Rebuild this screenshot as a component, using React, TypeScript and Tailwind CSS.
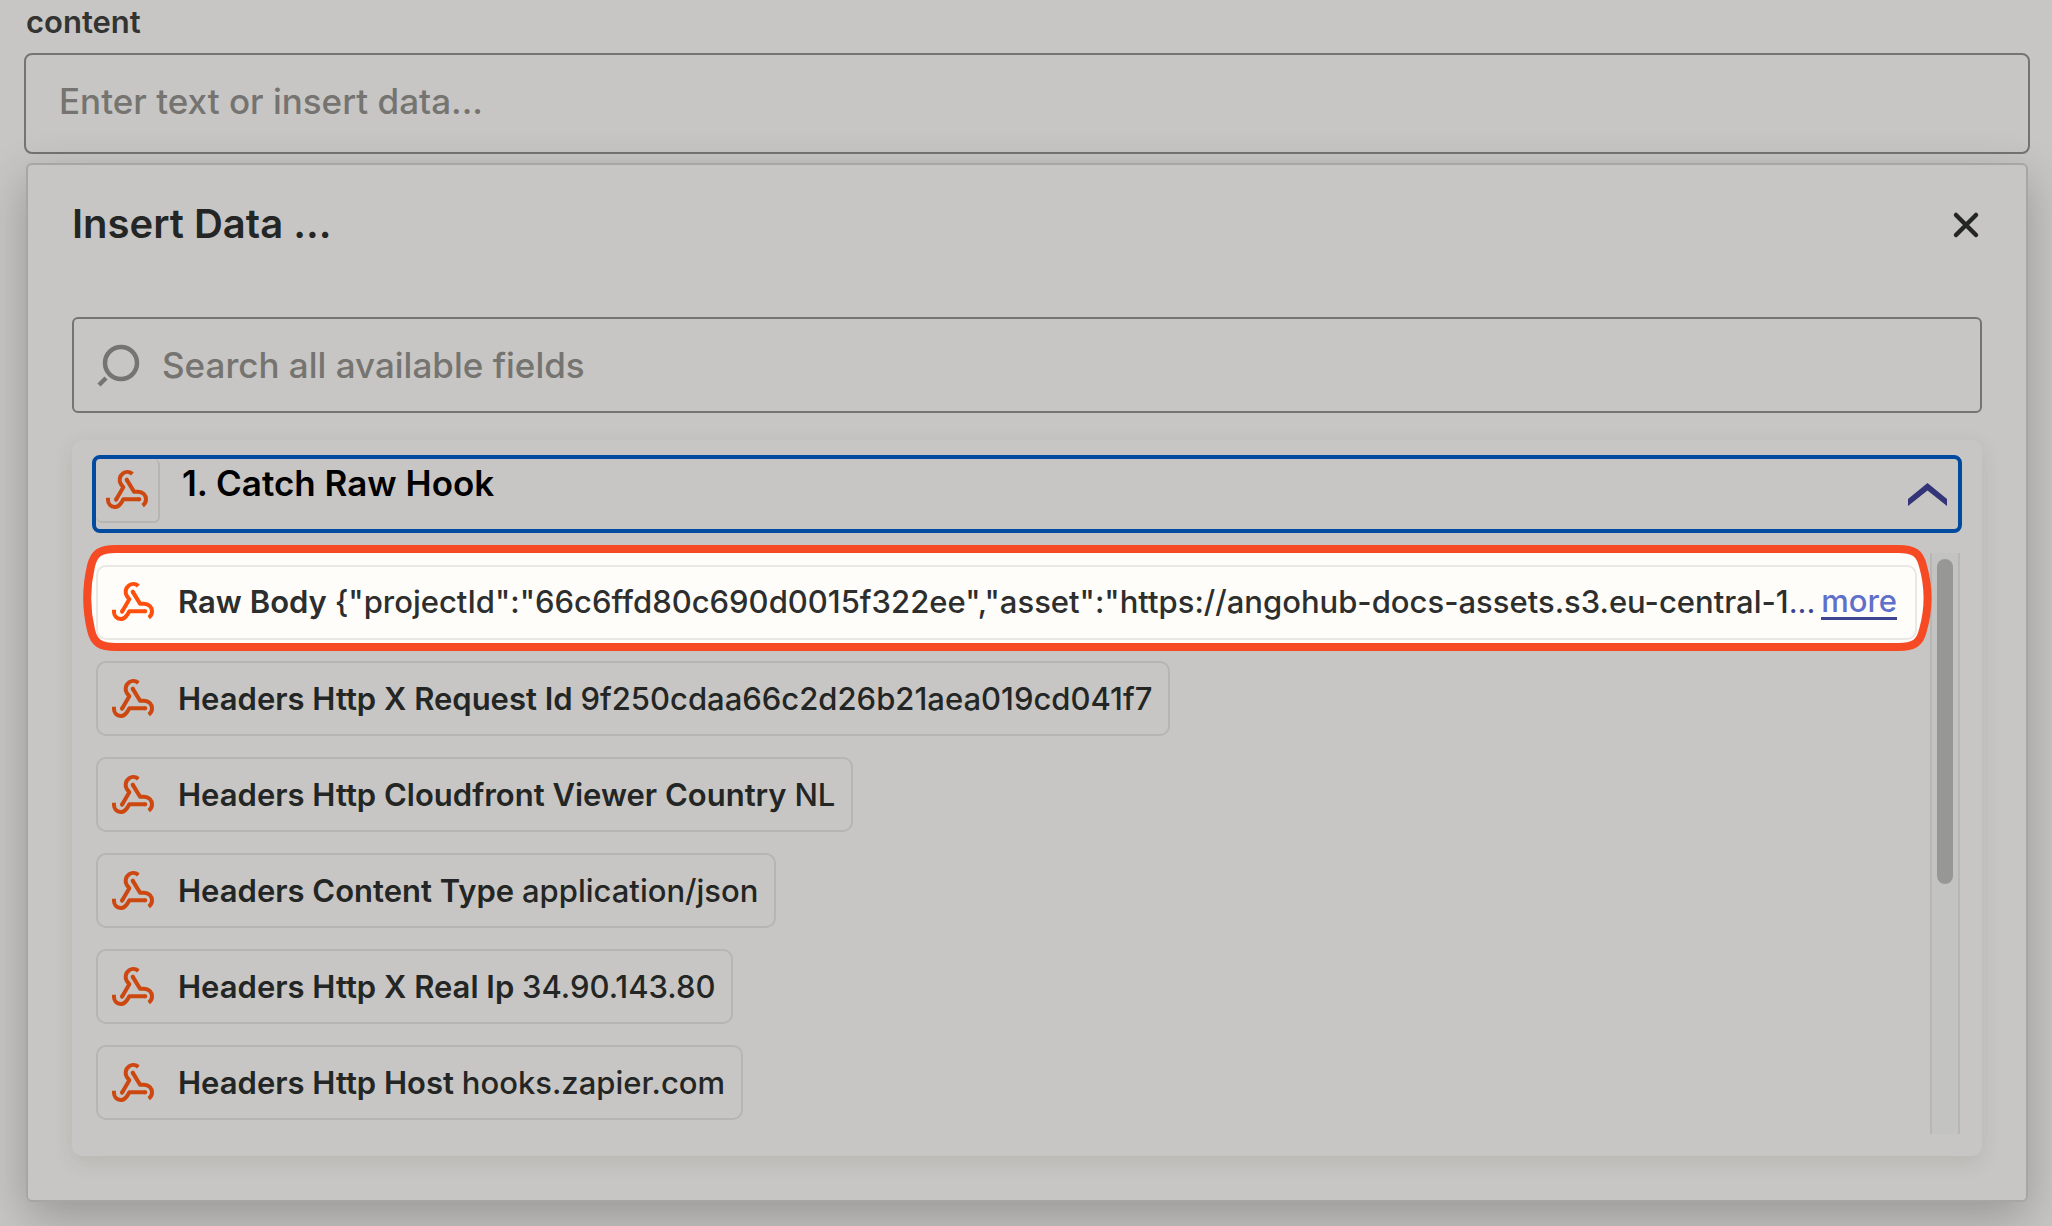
import React from "react";

const fields = [
  { name: "Headers Http X Request Id", value: "9f250cdaa66c2d26b21aea019cd041f7" },
  { name: "Headers Http Cloudfront Viewer Country", value: "NL" },
  { name: "Headers Content Type", value: "application/json" },
  { name: "Headers Http X Real Ip", value: "34.90.143.80" },
  { name: "Headers Http Host", value: "hooks.zapier.com" },
];

function HookIcon({ className }: { className: string }) {
  return (
    <svg
      viewBox="36 33 126 120"
      className={"mb-[2px] h-[40px] w-[42px] shrink-0 " + className}
      fill="none"
      stroke="currentColor"
      strokeWidth="12"
      strokeLinejoin="round"
      aria-hidden="true"
    >
      <path d="M115 48C108 41 96 40 87 46C76 54 74 69 81 79L88 88L66 125" />
      <path d="M98 65L120 101H132C146 101 156 111 156 124C156 132 153 138 146 143" />
      <path d="M136 124H88L82 134C76 143 69 148 62 147C50 146 42 137 42 127V119" />
      <path strokeLinecap="round" d="M98 65L99 67M66 125L67 123M136 124H134" />
    </svg>
  );
}

function FieldRow({ name, value }: { name: string; value: string }) {
  return (
    <button
      type="button"
      className="flex h-[75px] items-center rounded-[10px] border-2 border-[#b6b5b2] pr-4 pl-[14px] text-left text-[31px] leading-[40px] whitespace-pre text-[#242625]"
    >
      <HookIcon className="mr-6 text-[#cc4810]" />
      <span className="font-semibold">{name} </span>
      <span className="font-medium">{value}</span>
    </button>
  );
}

export default function App() {
  return (
    <div className="flex min-h-screen flex-col bg-[#c7c6c4] pr-[22px] pb-6 pl-6 font-['Inter',sans-serif] text-[#242625]">
      <label htmlFor="content" className="h-[53px] pt-[2px] pl-[2px] text-[31px] leading-[40px] font-semibold text-[#333332]">
        content
      </label>
      <input
        id="content"
        type="text"
        placeholder="Enter text or insert data..."
        className="h-[101px] w-full rounded-[8px] border-2 border-[#757470] bg-transparent px-[33px] pb-[6px] text-[35px] font-medium placeholder:text-[#757470]"
      />

      <section className="mt-[9px] mr-[2px] ml-[2px] flex flex-1 flex-col rounded-[6px] border-2 border-[#a7a6a4] bg-[#c7c6c4] px-11 pb-[44px] shadow-[0_16px_48px_rgba(0,0,0,0.24)]">
        <header className="flex h-[152px] items-start justify-between pt-[34px]">
          <h2 className="text-[40px] leading-[50px] font-semibold">Insert Data ...</h2>
          <button type="button" aria-label="Close" className="mt-[12px] mr-[2px]">
            <svg viewBox="0 0 28 28" className="h-7 w-7" fill="none" stroke="currentColor" strokeWidth="4.5" strokeLinecap="round" aria-hidden="true">
              <path d="M4 4L24 24M24 4L4 24" />
            </svg>
          </button>
        </header>

        <div className="flex h-[96px] items-center rounded-[6px] border-2 border-[#757470] pr-6 pl-[23px] text-[#757470]">
          <svg viewBox="0 0 44 44" className="h-11 w-11 shrink-0" fill="none" stroke="currentColor" strokeWidth="4.5" aria-hidden="true">
            <circle cx="24" cy="20" r="16" />
            <path d="M9 35L2 42" />
          </svg>
          <input
            type="search"
            aria-label="Search all available fields"
            placeholder="Search all available fields"
            className="ml-[21px] min-w-0 flex-1 bg-transparent text-[35px] font-medium placeholder:text-[#757470]"
          />
        </div>

        <div className="mt-[27px] flex flex-1 flex-col rounded-[10px] px-5 pt-[15px] pb-[22px] shadow-[0_6px_20px_rgba(60,50,0,0.10)]">
          <button
            type="button"
            aria-expanded="true"
            className="flex h-[78px] items-start justify-between rounded-[8px] border-4 border-[#004ba0] pr-[11px] text-left"
          >
            <span className="flex">
              <span className="flex h-16 w-16 items-center justify-center rounded-[6px] border-r-2 border-b-2 border-[#b6b5b2]">
                <HookIcon className="text-[#cc4810]" />
              </span>
              <span className="ml-[22px] text-[35px] leading-[48px] font-semibold text-black">1. Catch Raw Hook</span>
            </span>
            <svg viewBox="0 0 39 23" className="mt-6 h-[23px] w-[39px]" fill="#343578" aria-hidden="true">
              <path d="M0 16L19.500 0L39 16V23L19.500 7.500L0 23Z" />
            </svg>
          </button>

          <div className="mt-5 flex flex-1">
            <div className="flex min-w-0 flex-1 flex-col items-start gap-[21px] pt-3 pr-[13px] pl-1">
              <div className="relative flex h-[75px] w-full items-center rounded-[10px] pr-5 pb-[2px] pl-4">
                <svg
                  viewBox="0 0 1850 108"
                  preserveAspectRatio="none"
                  className="absolute -top-[21px] -left-[14px] h-[108px] w-[calc(100%+29px)]"
                  aria-hidden="true"
                >
                  <path
                    d="M34 5H1816C1832 5 1838 9 1841 22C1847 43 1847 65 1841 86C1838 99 1832 103 1816 103H34C18 103 12 99 9 86C4 65 4 43 9 22C12 9 18 5 34 5Z"
                    fill="#fffdf9"
                    stroke="#f64a25"
                    strokeWidth="8"
                  />
                </svg>
                <div className="absolute inset-0 rounded-[10px] border-2 border-[#e9e8e4]" />
                <HookIcon className="relative mr-6 text-[#ff4f0c]" />
                <p className="relative text-[31px] leading-[40px] font-medium whitespace-nowrap text-[#2d2e2e]">
                  <span className="font-semibold">Raw Body </span>
                  {'{"projectId":"66c6ffd80c690d0015f322ee","asset":"https://angohub-docs-assets.s3.eu-central-1'}
                  <span className="font-normal text-[#3d4592]">...</span>
                </p>
                <a href="#more" className="relative mt-[2px] ml-auto border-b-[3px] border-[#3d4592] text-[31px] leading-[32px] font-medium text-[#5f70cc]">
                  more
                </a>
              </div>
              {fields.map((field) => (
                <FieldRow key={field.name} name={field.name} value={field.value} />
              ))}
            </div>
            <div className="mr-[2px] flex w-[30px] justify-center border-x-2 border-[#b6b6b5] bg-[#c3c3c2] pt-[6px]">
              <div className="h-[325px] w-4 rounded-full bg-[#979796]" />
            </div>
          </div>
        </div>
      </section>
    </div>
  );
}
